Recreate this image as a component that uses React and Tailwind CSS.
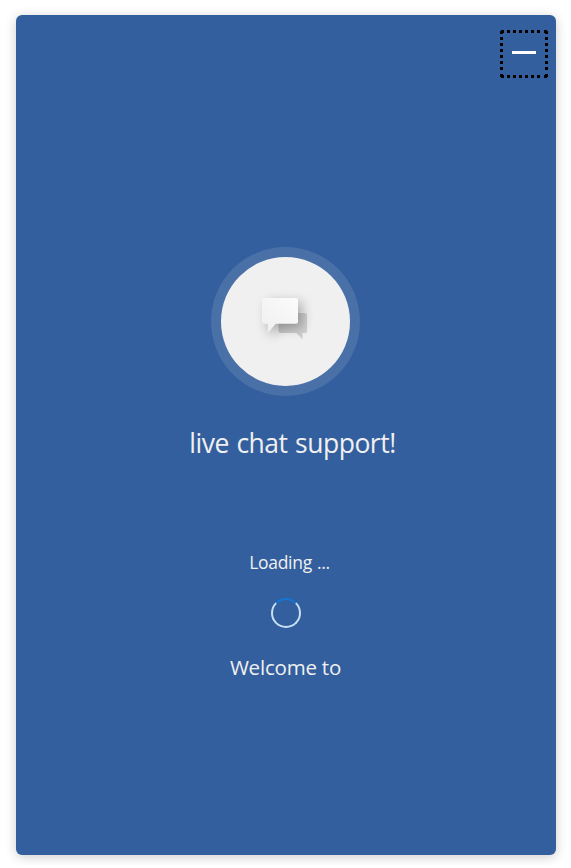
const DOTS = [1, 7, 13, 19, 25, 31, 37, 44];

function FocusRing() {
  return (
    <svg className="absolute inset-0" width="48" height="48" viewBox="0 0 48 48" shapeRendering="crispEdges">
      {DOTS.map((d) => (
        <g key={d}>
          <rect x={d} y="0" width="3" height="3" />
          <rect x={d} y="45" width="3" height="3" />
          <rect x="0" y={d} width="3" height="3" />
          <rect x="45" y={d} width="3" height="3" />
        </g>
      ))}
    </svg>
  );
}

function ChatIcon() {
  return (
    <svg width="129" height="129" viewBox="221 257 129 129">
      <defs>
        <linearGradient id="front" x1="0" y1="1" x2="1" y2="0">
          <stop offset="0" stopColor="#f0f0f0" />
          <stop offset="0.5" stopColor="#f5f5f5" />
          <stop offset="1" stopColor="#fcfcfc" />
        </linearGradient>
        <linearGradient id="back" x1="0" y1="0" x2="1" y2="0">
          <stop offset="0" stopColor="#c8c8c8" />
          <stop offset="1" stopColor="#d0d0d0" />
        </linearGradient>
        <filter id="soft" x="-60%" y="-60%" width="220%" height="220%">
          <feGaussianBlur stdDeviation="6" />
        </filter>
      </defs>
      <path
        d="M280.500 313H305Q307 313 307 315V331Q307 333 305 333H302.500V339.500L296.500 333H280.500Q278.500 333 278.500 331V315Q278.500 313 280.500 313Z"
        fill="url(#back)"
      />
      <path
        d="M267 302H302V328H280L270 337V328H267Z"
        fill="#000"
        opacity="0.29"
        filter="url(#soft)"
      />
      <path
        d="M264.500 298H296Q298 298 298 300V321.700Q298 323.700 296 323.700H275.700L267.800 333V323.700H264.500Q262 323.700 262 321.700V300Q262 298 264.500 298Z"
        fill="url(#front)"
      />
    </svg>
  );
}

export default function App() {
  return (
    <div className="h-[868px] w-[571px] overflow-hidden bg-white font-['Open_Sans','Noto_Sans',sans-serif]">
      <div className="h-[865px] overflow-hidden px-4 pt-[15px]">
        <main className="flex h-[840px] w-[540px] flex-col items-center rounded-md bg-[#335f9e] text-[#f0f0f0] shadow-[0_2px_12px_rgba(0,0,0,0.2)]">
          <div className="flex w-full justify-end pt-[15px] pr-2">
            <button aria-label="Minimize" className="relative flex size-12 items-start justify-center pt-[21px]">
              <FocusRing />
              <span className="h-[2.5px] w-6 bg-white" />
            </button>
          </div>
          <div className="mt-[169px] mr-px flex size-[149px] items-center justify-center rounded-full bg-[#4a70a8]">
            <div className="size-[129px] overflow-hidden rounded-full bg-[#f0f0f0]">
              <ChatIcon />
            </div>
          </div>
          <h1 className="mt-[27px] ml-[13px] h-10 text-[26.5px] leading-10 tracking-[-0.5px] whitespace-nowrap [word-spacing:1.2px]">live chat support!</h1>
          <p className="mt-[87px] ml-[7px] h-6 text-[17.5px] leading-6 tracking-[-0.3px] whitespace-nowrap [word-spacing:0.8px]">Loading ...</p>
          <div className="mt-6 size-[30px] rounded-full border-2 border-[#c7e0f4] border-t-[#1475d2]" />
          <p className="mt-[25px] mr-px h-7 text-[20.5px] leading-7 tracking-[-0.2px] whitespace-nowrap">Welcome to</p>
        </main>
      </div>
    </div>
  );
}
